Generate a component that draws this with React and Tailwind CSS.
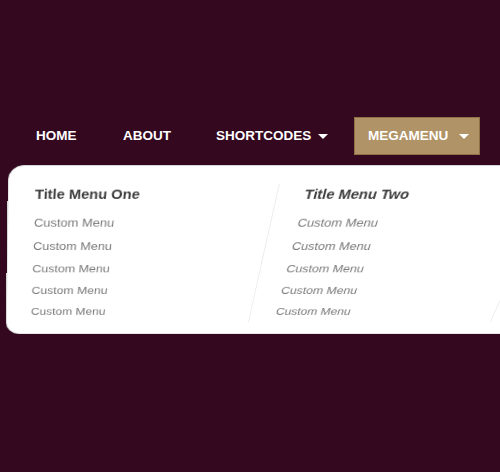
import React from "react";

const items = ["Custom Menu", "Custom Menu", "Custom Menu", "Custom Menu", "Custom Menu"];

function Caret() {
  return (
    <span className="inline-block w-0 h-0 border-x-[5px] border-x-transparent border-t-[5px] border-t-white" />
  );
}

function Column({ title, first, empty }) {
  return (
    <div
      className={
        first
          ? "w-[274px] shrink-0 pl-[27px]"
          : "w-[275px] shrink-0 pl-[28px] border-l border-[#ececec]"
      }
    >
      {!empty && (
        <>
          <div className="text-[15px] font-bold leading-[21px] text-[#3d3d3d] whitespace-nowrap">{title}</div>
          <ul className="mt-[8px]">
            {items.map((t, i) => (
              <li key={i} className="h-[27px] leading-[27px] text-[13.5px] text-[#7a7a7a] whitespace-nowrap">
                {t}
              </li>
            ))}
          </ul>
        </>
      )}
    </div>
  );
}

export default function App() {
  return (
    <div className="w-[500px] h-[472px] overflow-hidden bg-[#34081f] font-['Liberation_Sans',Arial,sans-serif]">
      <nav className="flex items-center h-[38px] mt-[117px] pl-[36px] text-[13.5px] font-bold uppercase text-white">
        <span className="w-[87px] shrink-0">Home</span>
        <span className="w-[93px] shrink-0">About</span>
        <span className="w-[102px] shrink-0">Shortcodes</span>
        <Caret />
        <div className="ml-[26px] w-[126px] h-[38px] shrink-0 flex items-center pl-[13px] bg-[#b09366] border border-[#8f7148]">
          <span className="w-[91px] shrink-0">Megamenu</span>
          <Caret />
        </div>
      </nav>
      <div className="mt-[10px] ml-[8px] w-[840px] h-[201px] flex pt-[19px] pb-[15px] bg-white border border-[#d6d6d6] rounded-[16px] origin-[-18px_0px] [transform:perspective(352px)_rotateX(-15deg)]">
        <Column title="Title Menu One" first />
        <Column title="Title Menu Two" />
        <Column empty />
      </div>
    </div>
  );
}
